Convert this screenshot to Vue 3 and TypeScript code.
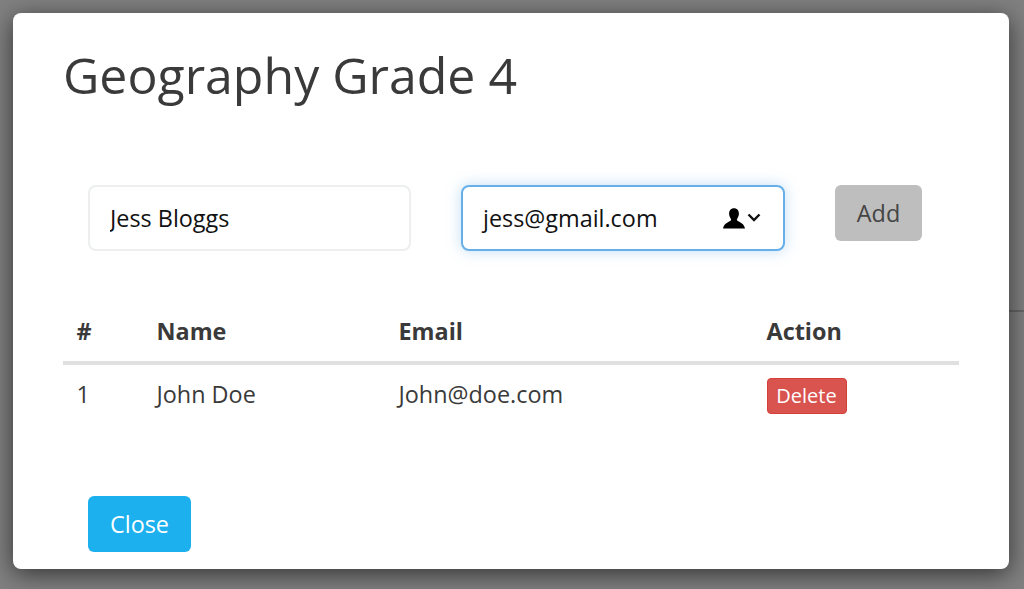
<template>
  <div class="backdrop">
    <div class="page-line"></div>
    <div class="modal">
      <h1>Geography Grade 4</h1>

      <form class="add-form" @submit.prevent>
        <input class="field name-field" type="text" v-model="nombre" />
        <div class="field email-field">
          <span>{{ correo }}</span>
          <span class="email-icons">
            <svg class="icon-user" width="22" height="21" viewBox="0 0 22 21">
              <path d="M11 .3c-3 0-4.900 2.200-4.900 5.300 0 2.100.7 3.800 1.700 5.100.4.600.4 1.500-.3 2C5.600 14.100 1 15.100 0 20.500h22c-1-5.400-5.600-6.400-7.500-7.800-.7-.5-.7-1.400-.3-2 1-1.300 1.700-3 1.700-5.100C15.900 2.500 14 .3 11 .3z" fill="#000" />
            </svg>
            <svg class="icon-chevron" width="14" height="9" viewBox="0 0 14 9">
              <path d="M1.500 1.500L7 7l5.500-5.500" fill="none" stroke="#111" stroke-width="2.400" />
            </svg>
          </span>
        </div>
        <button class="btn btn-add" type="button">Add</button>
      </form>

      <table>
        <thead>
          <tr>
            <th class="col-num">#</th>
            <th class="col-name">Name</th>
            <th class="col-email">Email</th>
            <th>Action</th>
          </tr>
        </thead>
        <tbody>
          <tr v-for="(alumno, i) in alumnos" :key="alumno.email">
            <td>{{ i + 1 }}</td>
            <td>{{ alumno.name }}</td>
            <td>{{ alumno.email }}</td>
            <td><button class="btn-delete" type="button">Delete</button></td>
          </tr>
        </tbody>
      </table>

      <button class="btn btn-close" type="button">Close</button>
    </div>
  </div>
</template>

<script setup lang="ts">
import { ref } from 'vue';

interface Alumno {
  name: string;
  email: string;
}

const nombre = ref('Jess Bloggs');
const correo = ref('jess@gmail.com');
const alumnos = ref<Alumno[]>([{ name: 'John Doe', email: 'John@doe.com' }]);
</script>

<style>
html,
body {
  margin: 0;
  background: #808080;
}
</style>

<style scoped>
.backdrop {
  position: relative;
  box-sizing: border-box;
  width: 1024px;
  height: 589px;
  padding: 13px 15px 20px 13px;
  background: #808080;
  overflow: hidden;
  font-family: "Open Sans", sans-serif;
  color: #3a3a3a;
}

.page-line {
  position: absolute;
  left: 1000px;
  right: 0;
  top: 310px;
  height: 2px;
  background: #666;
}

.modal {
  position: relative;
  box-sizing: border-box;
  height: 556px;
  padding: 26px 50px 0;
  background: #fff;
  border-radius: 8px;
  box-shadow: 0 5px 25px rgba(0, 0, 0, 0.6);
}

h1 {
  margin: 0;
  height: 73px;
  font-size: 50px;
  line-height: 72px;
  font-weight: 400;
  color: #3a3a3a;
}

.add-form {
  display: flex;
  align-items: flex-start;
  gap: 50px;
  margin-top: 73px;
  padding-left: 25px;
}

.field {
  box-sizing: border-box;
  width: 324px;
  height: 66px;
  padding: 0 20px;
  border: 2px solid #eceeef;
  border-radius: 8px;
  background: #fff;
  font-family: inherit;
  font-size: 23.4px;
  color: #111;
  outline: none;
}

.name-field {
  width: 323px;
}

.email-field {
  display: flex;
  align-items: center;
  justify-content: space-between;
  padding-right: 22px;
  border-color: #66afe9;
  box-shadow: 0 0 14px 1px rgba(102, 175, 233, 0.35);
}

.email-icons {
  display: flex;
  align-items: center;
  gap: 2px;
}

.icon-chevron {
  margin-top: -2px;
}

.btn {
  border: none;
  border-radius: 6px;
  font-family: inherit;
  font-size: 23.4px;
}

.btn-add {
  width: 87px;
  height: 56px;
  padding: 0 0 1px;
  background: #bebebe;
  color: #444;
}

table {
  width: 896px;
  margin-top: 46px;
  border-collapse: collapse;
  table-layout: fixed;
  font-size: 23.4px;
}

th {
  height: 66px;
  padding: 3px 14px 0 13.5px;
  border-bottom: 4px solid #e0e0e0;
  text-align: left;
  font-weight: 700;
  box-sizing: border-box;
}

td {
  height: 60px;
  padding: 0 14px 0 13.5px;
  box-sizing: border-box;
}

.col-num {
  width: 80px;
}

.col-name {
  width: 242px;
}

.col-email {
  width: 368px;
}

.btn-delete {
  display: block;
  width: 80px;
  height: 36px;
  padding: 0 0 2px;
  margin-top: 4px;
  border: 1px solid #d43f3a;
  border-radius: 4px;
  background: #d9534f;
  color: #fff;
  font-family: inherit;
  font-size: 20px;
}

.btn-close {
  display: block;
  width: 103px;
  height: 56px;
  padding: 0 0 1px;
  margin: 73px 0 0 25px;
  background: #1cb0ee;
  color: #fff;
}
</style>
